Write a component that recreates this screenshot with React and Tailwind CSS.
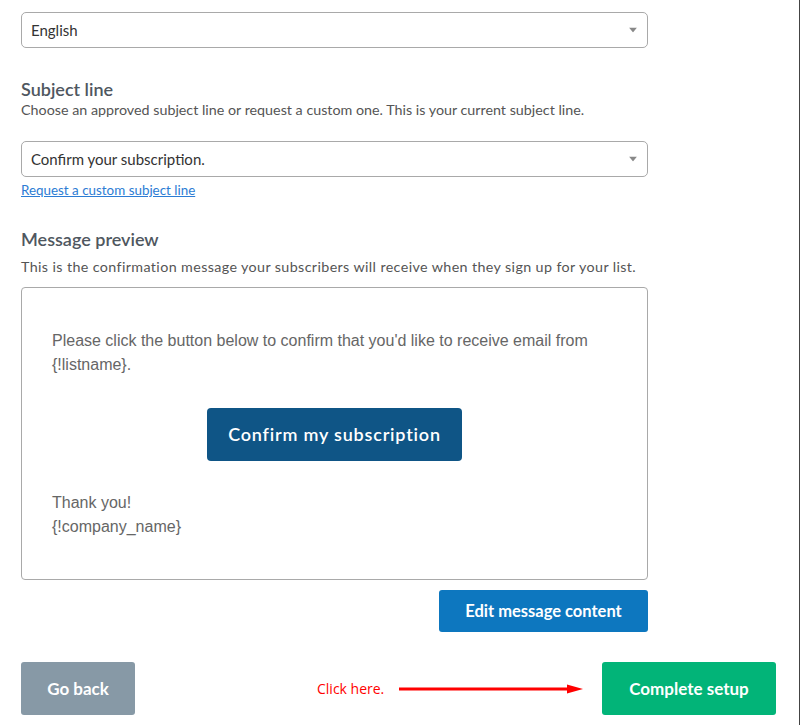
import { useState } from "react";

function Select({ value }) {
  return (
    <div className="relative h-[36px] w-full rounded-[5px] border border-[#a9a9a9] bg-white flex items-center pl-[9px] text-[15px] text-[#333]">
      <span>{value}</span>
      <svg
        className="absolute right-[10px] top-1/2 -translate-y-1/2"
        width="8"
        height="5"
        viewBox="0 0 8 5"
      >
        <path d="M0 0h8L4 5z" fill="#888" />
      </svg>
    </div>
  );
}

export default function App() {
  const [lang] = useState("English");

  return (
    <div
      className="w-[800px] h-[725px] bg-white border-r border-[#444] pl-[21px] pt-[12px]"
      style={{ fontFamily: "Lato, 'Liberation Sans', sans-serif" }}
    >
      <div className="w-[627px]">
        <Select value={lang} />

        <h2 className="mt-[29px] text-[18px] leading-[24px] font-semibold text-[#4f5760]">
          Subject line
        </h2>
        <p className="mt-[-1px] text-[14.3px] leading-[20px] text-[#555]">
          Choose an approved subject line or request a custom one. This is your
          current subject line.
        </p>

        <div className="mt-[21px]">
          <Select value="Confirm your subscription." />
        </div>
        <a
          href="#"
          className="block mt-[4px] text-[13.4px] leading-[18px] text-[#2c7cd4] underline"
        >
          Request a custom subject line
        </a>

        <h2 className="mt-[28px] text-[18px] leading-[24px] font-semibold text-[#4f5760]">
          Message preview
        </h2>
        <p className="mt-[6px] text-[14.3px] leading-[20px] tracking-[0.38px] text-[#555] whitespace-nowrap">
          This is the confirmation message your subscribers will receive when
          they sign up for your list.
        </p>

        <div className="mt-[10px] h-[293px] rounded-[4px] border border-[#a9a9a9] px-[30px] pt-[41px]">
          <p
            className="text-[16px] leading-[24px] text-[#666]"
            style={{ fontFamily: "'Liberation Sans', Arial, sans-serif" }}
          >
            Please click the button below to confirm that you'd like to receive
            email from {"{!listname}"}.
          </p>
          <div className="mt-[31px] flex justify-center">
            <button className="h-[53px] w-[255px] rounded-[4px] bg-[#0f5586] text-white text-[18px] font-semibold tracking-[0.8px]">
              Confirm my subscription
            </button>
          </div>
          <p
            className="mt-[30px] text-[16px] leading-[24px] text-[#666]"
            style={{ fontFamily: "'Liberation Sans', Arial, sans-serif" }}
          >
            Thank you!
            <br />
            {"{!company_name}"}
          </p>
        </div>

        <div className="mt-[10px] flex justify-end">
          <button className="h-[42px] w-[209px] rounded-[3px] bg-[#0d77bf] text-white text-[16.5px] font-bold">
            Edit message content
          </button>
        </div>
      </div>

      <div className="mt-[30px] flex items-center w-[755px]">
        <button className="h-[53px] w-[114px] rounded-[3px] bg-[#8799a6] text-white text-[17px] font-bold">
          Go back
        </button>
        <span
          className="ml-[182px] text-[14px] text-[#ff0000]"
          style={{ fontFamily: "'Open Sans', sans-serif" }}
        >
          Click here.
        </span>
        <svg className="ml-[15px]" width="185" height="12" viewBox="0 0 185 12">
          <path d="M0 6h170" stroke="#ff0000" strokeWidth="3" />
          <path d="M168 1.5L184 6l-16 4.5z" fill="#ff0000" />
        </svg>
        <button className="ml-auto h-[53px] w-[174px] rounded-[3px] bg-[#02b478] text-white text-[17px] font-bold">
          Complete setup
        </button>
      </div>
    </div>
  );
}
